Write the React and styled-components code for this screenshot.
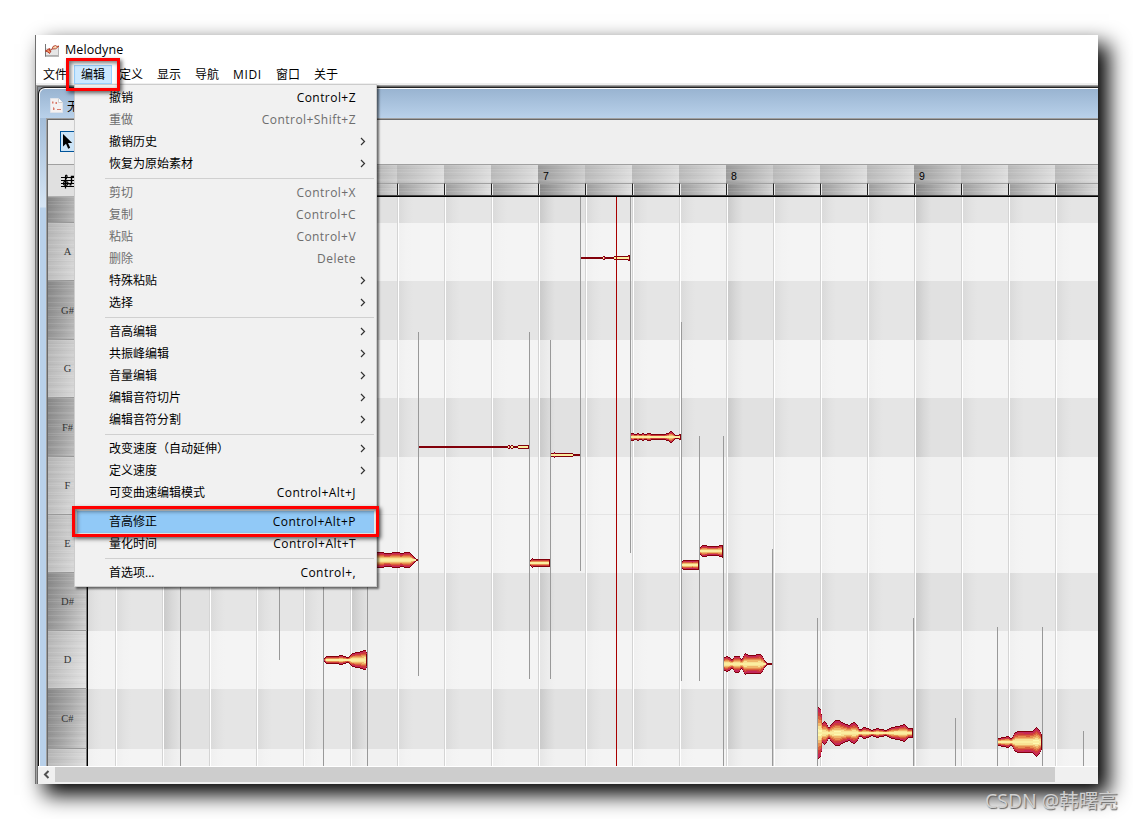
import React from 'react'
import styled, { createGlobalStyle, css } from 'styled-components'

const GlobalStyle = createGlobalStyle`
    * {
        box-sizing: border-box;
    }
    body {
        margin: 0;
        background: #fff;
        overflow: hidden;
        font-family: 'Open Sans', 'Noto Sans CJK SC', sans-serif;
        font-size: 12px;
        color: #000;
    }
    `
const Desktop = styled.div`
    position: relative;
    width: 1133px;
    height: 819px;
    padding: 35px;
    overflow: hidden;
    `
const Window = styled.div`
    display: flex;
    flex-direction: column;
    width: 1063px;
    height: 749px;
    background: #fff;
    border-left: 1px solid #707070;
    box-shadow: 10px 10px 20px 1px #000;
    `
const TitleBar = styled.div`
    display: flex;
    align-items: center;
    gap: 5px;
    height: 29px;
    padding-left: 8px;
    font-size: 12.5px;
    letter-spacing: 0.1px;
    `
const MenuBar = styled.div`
    display: flex;
    height: 19px;
    margin-top: 1px;
    margin-bottom: -1px;
    position: relative;
    z-index: 2;
    `
const MenuTitle = styled.div`
    position: relative;
    height: 19px;
    padding: 0 ${props => props.$open ? 6 : 7}px;
    line-height: ${props => props.$open ? 17 : 19}px;
    white-space: nowrap;
    ${props => props.$latin && css`
        width: 43px;
        letter-spacing: 0.6px;
    `}
    ${props => props.$open && css`
        background: #cce8ff;
        border: 1px solid #99d1ff;
    `}
    `
const Menu = styled.div`
    position: absolute;
    left: -1px;
    top: 18px;
    width: 303px;
    padding: 2px;
    background: #f1f1f1;
    border: 1px solid #ccc;
    box-shadow: 2px 2px 2px rgba(0, 0, 0, 0.55);
    `
const MenuRow = styled.div`
    display: flex;
    align-items: center;
    justify-content: space-between;
    height: 22px;
    padding: 0 17px 0 32px;
    line-height: 22px;
    color: ${props => props.$disabled ? '#6d6d6d' : '#000'};
    background: ${props => props.$active ? '#91c9f7' : 'none'};
    `
const Shortcut = styled.span`
    margin-right: 1px;
    letter-spacing: 0.45px;
    `
const Chevron = styled.svg`
    width: 6px;
    height: 9px;
    margin: 0 -9px 1px 0;
    `
const Divider = styled.div`
    height: 7px;
    margin-left: 28px;
    padding-top: 3px;
    &::after {
        content: '';
        display: block;
        height: 1px;
        background: #d0d0d0;
    }
    `
const Workspace = styled.div`
    flex: 1;
    display: flex;
    flex-direction: column;
    min-height: 0;
    padding-top: 2px;
    background: #f0f0f0;
    `
const Mdi = styled.div`
    flex: 1;
    display: flex;
    flex-direction: column;
    min-height: 0;
    border-left: 1px solid #a0a0a0;
    border-top: 1px solid #a0a0a0;
    `
const MdiInner = styled.div`
    flex: 1;
    display: flex;
    flex-direction: column;
    min-height: 0;
    border-left: 1px solid #696969;
    border-top: 1px solid #696969;
    background: #8a8f96;
    `
const Doc = styled.div`
    height: 679px;
    display: flex;
    flex-direction: column;
    border-left: 1px solid #111;
    border-top: 1px solid #222;
    border-top-left-radius: 7px;
    background: #111;
    `
const DocFace = styled.div`
    flex: 1;
    display: flex;
    flex-direction: column;
    min-height: 0;
    padding-left: 6px;
    border-left: 1px solid #fff;
    border-top: 1px solid #fff;
    border-top-left-radius: 6px;
    background:
        linear-gradient(#99b4d1, #b9d1ea) 0 0 / 100% 29px no-repeat,
        linear-gradient(#a3bdd9 29px, #d6e5f4 118px, #b9d1ea 119px);
    `
const DocTitle = styled.div`
    display: flex;
    align-items: center;
    gap: 4px;
    height: 29px;
    padding: 4px 0 0 4px;
    `
const DocBody = styled.div`
    flex: 1;
    display: flex;
    flex-direction: column;
    min-height: 0;
    border-left: 1px solid #a0a0a0;
    border-top: 1px solid #a0a0a0;
    `
const DocContent = styled.div`
    flex: 1;
    display: flex;
    flex-direction: column;
    min-height: 0;
    border-left: 1px solid #696969;
    border-top: 1px solid #696969;
    background: #efefef;
    `
const Toolbar = styled.div`
    display: flex;
    align-items: center;
    height: 45px;
    padding-left: 12px;
    border-bottom: 1px solid #a0a0a0;
    `
const Tool = styled.div`
    display: flex;
    width: 21px;
    height: 21px;
    margin-bottom: 1px;
    background: #cce4f7;
    border: 1px solid #00549a;
    `
const RulerRow = styled.div`
    display: flex;
    height: 32px;
    `
const Corner = styled.div`
    width: 40px;
    padding: 8px 0 0 11px;
    background: #e0e0e0;
    border-bottom: 1px solid #b0b0b0;
    `
const Ruler = styled.div`
    display: flex;
    flex: 1;
    overflow: hidden;
    border-bottom: 1px solid #000;
    box-shadow: inset 0 -1px 0 #444;
    `
const streaks = css`
    repeating-linear-gradient(180deg, rgba(255, 255, 255, 0.1) 0 1px, transparent 1px 3px, rgba(0, 0, 0, 0.025) 3px 4px, transparent 4px 7px),
    repeating-linear-gradient(180deg, transparent 0 4px, rgba(255, 255, 255, 0.08) 4px 5px, transparent 5px 11px)
    `
const Beat = styled.div`
    flex: none;
    width: ${props => props.$width}px;
    display: flex;
    flex-direction: column;
    `
const BeatTop = styled.div`
    height: 18px;
    padding-left: 5px;
    font: 10.5px/22px 'Liberation Sans', sans-serif;
    background: ${streaks}, linear-gradient(105deg, ${props => props.$bar ? '#9a9a9a, #d0d0d0' : '#b8b8b8, #e0e0e0'});
    `
const BeatBottom = styled.div`
    height: 12px;
    border-top: 1px solid #a0a0a0;
    border-left: 1px solid #222;
    box-shadow: inset 1px 0 0 #eee;
    background: ${streaks}, linear-gradient(105deg, ${props => props.$bar ? '#868686, #d6d6d6' : '#9c9c9c, #e2e2e2'});
    `
const Editor = styled.div`
    display: flex;
    flex: 1;
    min-height: 0;
    overflow: hidden;
    `
const Keys = styled.div`
    width: 40px;
    flex: none;
    border-right: 1px solid #000;
    `
const Key = styled.div`
    height: ${props => props.$height}px;
    display: flex;
    align-items: center;
    justify-content: center;
    overflow: hidden;
    padding: 1px 0 0 1px;
    font: 10.5px/10px 'Liberation Serif', serif;
    color: #333;
    border-bottom: 1px solid #999;
    border-right: 1px solid #777;
    background: ${streaks}, linear-gradient(100deg, ${props => props.$dark ? '#868686, #a8a8a8 50%, #d0d0d0' : '#b4b4b4, #cccccc 50%, #e4e4e4'});
    `
const Roll = styled.div`
    flex: 1;
    display: grid;
    overflow: hidden;
    `
const Lanes = styled.div`
    grid-area: 1 / 1;
    min-width: 0;
    overflow: hidden;
    `
const Lane = styled.div`
    display: flex;
    height: ${props => props.$height}px;
    `
const laneFill = props => {
    if (props.$dark) return props.$bar ? '#cacaca, #d8d8d8 8px, #e1e1e1 15px' : '#dadada, #e1e1e1 7px, #e5e5e5 14px'
    return props.$bar ? '#e6e6e6, #ededed 8px, #f1f1f1 15px' : '#f0f0f0, #f3f3f3 7px, #f4f4f4 14px'
}
const Cell = styled.div`
    flex: none;
    width: ${props => props.$width}px;
    border-left: 1px solid #fff;
    border-right: 1px solid #d4d4d4;
    background: linear-gradient(90deg, ${laneFill});
    box-shadow: ${props => props.$line ? 'inset 0 -1px 0 #e4e4e4' : 'none'};
    &:first-child {
        border-left: 0;
    }
    `
const Notes = styled.svg`
    grid-area: 1 / 1;
    width: 1010px;
    height: 569px;
    `
const ScrollBar = styled.div`
    display: flex;
    height: 18px;
    padding-bottom: 2px;
    background: #f0f0f0;
    border-top: 1px solid #fff;
    `
const ScrollArrow = styled.svg`
    width: 17px;
    height: 15px;
    `
const Thumb = styled.div`
    width: 1000px;
    background: #cdcdcd;
    `
const Marker = styled.div`
    position: absolute;
    z-index: 3;
    left: ${props => props.$x}px;
    top: ${props => props.$y}px;
    width: ${props => props.$w}px;
    height: ${props => props.$h}px;
    border: 3px solid #f00;
    box-shadow: 2px 2px 4px rgba(0, 0, 0, 0.6), inset 2px 2px 4px rgba(0, 0, 0, 0.55);
    `
const Watermark = styled.div`
    position: absolute;
    left: 985px;
    top: 788px;
    font-size: 19.5px;
    line-height: 26px;
    white-space: nowrap;
    color: #d0d0d0;
    text-shadow: 1px 1px 1px #666;
    `

const menuTitles = ['文件', '编辑', '定义', '显示', '导航', 'MIDI', '窗口', '关于']

const menuGroups = [
    [
        { label: '撤销', keys: 'Control+Z' },
        { label: '重做', keys: 'Control+Shift+Z', disabled: true },
        { label: '撤销历史', sub: true },
        { label: '恢复为原始素材', sub: true }
    ],
    [
        { label: '剪切', keys: 'Control+X', disabled: true },
        { label: '复制', keys: 'Control+C', disabled: true },
        { label: '粘贴', keys: 'Control+V', disabled: true },
        { label: '删除', keys: 'Delete', disabled: true },
        { label: '特殊粘贴', sub: true },
        { label: '选择', sub: true }
    ],
    [
        { label: '音高编辑', sub: true },
        { label: '共振峰编辑', sub: true },
        { label: '音量编辑', sub: true },
        { label: '编辑音符切片', sub: true },
        { label: '编辑音符分割', sub: true }
    ],
    [
        { label: '改变速度（自动延伸）', sub: true },
        { label: '定义速度', sub: true },
        { label: '可变曲速编辑模式', keys: 'Control+Alt+J' }
    ],
    [
        { label: '音高修正', keys: 'Control+Alt+P', active: true },
        { label: '量化时间', keys: 'Control+Alt+T' }
    ],
    [
        { label: '首选项...', keys: 'Control+,' }
    ]
]

const lanes = [
    { name: '', height: 26, dark: true },
    { name: 'A', height: 58 },
    { name: 'G#', height: 59, dark: true },
    { name: 'G', height: 58 },
    { name: 'F#', height: 59, dark: true },
    { name: 'F', height: 58, line: true },
    { name: 'E', height: 58 },
    { name: 'D#', height: 58, dark: true },
    { name: 'D', height: 58 },
    { name: 'C#', height: 60, dark: true },
    { name: '', height: 60 }
]

// first beat is cut by the key column, a bar starts every fourth beat
const beats = Array.from({ length: 22 }, (_, i) => ({
    bar: i % 4 === 2,
    number: i % 4 === 2 ? 5 + (i - 2) / 4 : ''
}))

// [x, top, bottom]
const separators = [
    [180, 500, 766], [279, 500, 660], [323, 500, 766], [367, 500, 766],
    [418, 332, 676], [529, 332, 679], [550, 340, 679], [580, 197, 571],
    [630, 197, 553], [681, 322, 681], [699, 436, 681], [723, 436, 766],
    [772, 549, 766], [817, 618, 766], [913, 618, 766], [955, 718, 766],
    [997, 627, 766], [1042, 627, 766], [1083, 731, 766]
]

// each blob is a centre line and its envelope, as [x, half height]
const blobs = [
    { y: 560, env: [[370, 7], [378, 8], [382, 8], [385, 7], [389, 7], [394, 8], [398, 8], [401, 7], [406, 8], [410, 7.5], [412, 6], [414, 3], [416, 1.5], [418, 0.5]] },
    { y: 447, env: [[419, 1], [507, 1], [509, 2], [510, 1], [512, 2], [514, 1], [517, 1], [518, 2], [529, 2]] },
    { y: 563, env: [[530, 3], [532, 5], [533, 4], [549, 4], [550, 3]] },
    { y: 455, env: [[551, 2], [553, 2], [554, 3], [556, 2], [573, 2], [573.5, 1], [580, 1]] },
    { y: 258, env: [[581, 1], [602, 1], [604, 2], [605, 1], [613, 1], [614, 2], [627, 2], [628, 3], [630, 3]] },
    { y: 437, env: [[631, 3.5], [633, 4], [635, 3], [638, 4], [640, 3], [643, 4], [645, 3], [648, 4], [650, 4], [651, 3], [664, 3], [668, 4], [670, 6], [672, 6], [674, 3.5], [676, 2], [678, 2], [679, 3], [681, 3]] },
    { y: 565, env: [[682, 3.5], [684, 5.5], [687, 5], [693, 4.5], [698, 5.5], [699, 4]] },
    { y: 551, env: [[700, 3.5], [702, 6], [705, 6], [708, 5], [717, 5], [720, 6], [723, 6.5]] },
    { y: 664, env: [[724, 7], [727, 8], [729, 7], [732, 4.5], [735, 8.5], [739, 8.5], [741, 5.5], [742, 5], [745, 11], [748, 9.5], [756, 9.5], [760, 10.5], [763, 7], [765, 3], [767, 1], [772, 1]] },
    { y: 733, env: [[818, 29], [819, 23], [820, 27], [821.5, 19], [822, 10], [825, 12], [829, 5.5], [832, 10], [835, 13], [839, 13], [843, 10.5], [849, 8], [854, 11], [856, 10], [860, 3.5], [864, 6], [868, 5], [872, 3], [877, 5], [886, 3], [892, 6], [898, 7], [905, 9], [908, 5.5], [911, 5], [913, 5]] },
    { y: 742, env: [[998, 4], [1003, 5], [1008, 6], [1011, 4], [1013, 6], [1015, 10], [1020, 11.5], [1028, 10.5], [1033, 11.5], [1037, 15], [1040, 11], [1042, 7]] },
    { y: 660, env: [[324, 1], [327, 4.5], [335, 4], [342, 5], [346, 3.5], [348, 3], [352, 7], [358, 8], [364, 10], [366, 10], [367, 6]] }
]

const layers = [
    [1, '#c4275a'],
    [0.85, '#cf3a3c'],
    [0.7, '#d9603c'],
    [0.56, '#e68e50'],
    [0.42, '#efb86c'],
    [0.28, '#f8e294'],
    [0.14, '#fdf9b0']
]

function outline(env, y, scale) {
    const top = env.map(([x, h]) => `${x},${y - h * scale}`)
    const bottom = [...env].reverse().map(([x, h]) => `${x},${y + h * scale}`)
    return [...top, ...bottom].join(' ')
}

function Blob({ y, env }) {
    // shrink by the outline's width before the inner layers are scaled
    const inner = env.map(([x, h]) => [x, Math.max(h - 1, 0)])
    const [endX, endH] = env[env.length - 1]
    return (
        <g>
            <polygon points={outline(env, y, 1)} fill="#82000a" />
            {layers.map(([scale, fill]) => (
                <polygon key={fill} points={outline(inner, y, scale)} fill={fill} />
            ))}
            <polygon points={outline(inner.map(([x, h]) => [x, Math.min(h, 0.8)]), y, 1)} fill="#fbeea0" />
            <rect x={endX - 1} y={y - endH} width="1" height={endH * 2} fill="#82000a" />
        </g>
    )
}

function PianoRoll() {
    return (
        <Editor>
            <Keys>
                {lanes.map((lane, i) => (
                    <Key key={i} $height={lane.height} $dark={lane.dark}>{lane.name}</Key>
                ))}
            </Keys>
            <Roll>
                <Lanes>
                    {lanes.map((lane, i) => (
                        <Lane key={i} $height={lane.height}>
                            {beats.map((beat, j) => (
                                <Cell key={j} $width={j === 0 ? 28 : 47} $bar={beat.bar} $dark={lane.dark} $line={lane.line} />
                            ))}
                        </Lane>
                    ))}
                </Lanes>
                <Notes viewBox="88 197 1010 569" shapeRendering="crispEdges">
                    {separators.map(([x, top, bottom]) => (
                        <rect key={x} x={x} y={top} width="1" height={bottom - top} fill="#999" />
                    ))}
                    {blobs.map(blob => <Blob key={blob.y + '-' + blob.env[0][0]} {...blob} />)}
                    <rect x="616" y="197" width="1" height="569" fill="#a80000" />
                </Notes>
            </Roll>
        </Editor>
    )
}

function EditMenu() {
    return (
        <Menu>
            {menuGroups.map((group, i) => (
                <React.Fragment key={i}>
                    {i > 0 && <Divider />}
                    {group.map(item => (
                        <MenuRow key={item.label} $disabled={item.disabled} $active={item.active}>
                            <span>{item.label}</span>
                            {item.keys && <Shortcut>{item.keys}</Shortcut>}
                            {item.sub && (
                                <Chevron viewBox="0 0 6 9">
                                    <path d="M1 1l3.5 3.5L1 8" fill="none" stroke="#333" strokeWidth="1.2" />
                                </Chevron>
                            )}
                        </MenuRow>
                    ))}
                </React.Fragment>
            ))}
        </Menu>
    )
}

function AppIcon() {
    return (
        <svg width="16" height="16" viewBox="0 0 16 16">
            <path d="M2 6h13v8H2z" fill="#e6e6e6" />
            <path d="M1.500 2v12.500M1 14h14" fill="none" stroke="#777" />
            <path d="M14.500 5v9" fill="none" stroke="#b5b5b5" />
            <path d="M1.500 9l4-2.500v2l1.500.5-1.500 2.500-1.500-1.500z" fill="#f09060" stroke="#b03020" strokeWidth=".9" />
            <path d="M6 8l2-.5 1-3 2.500-1 1.500 1 2-.5-1.500 1.500-2 1.300-3 .2" fill="#f8d8b0" stroke="#b03a28" strokeWidth=".9" />
        </svg>
    )
}

function DocIcon() {
    return (
        <svg width="13" height="16" viewBox="0 0 13 16">
            <path d="M.5.5h8l4 4v10H.5z" fill="#f4f1f1" stroke="#dfe3ea" />
            <path d="M8.500.5v4h4" fill="#fff" stroke="#c4c4c4" strokeWidth=".8" />
            <path d="M2 3.500h1.500v2H2zM5.500 4H7v2H5.500zM3 9l1.500 1v2H3zM7 11h4v1H7z" fill="#d97a6a" />
        </svg>
    )
}

function StaffIcon() {
    return (
        <svg width="24" height="18" viewBox="0 0 24 18" fill="none" stroke="#000">
            <path d="M2 4.500h22M2 7.500h22M2 10.500h22M2 13.500h22" shapeRendering="crispEdges" />
            <path d="M6.500 15.500V3.500c0-2 2-1.500 1.500.5-.5 2.500-3.500 4-3.500 6.500s4.500 2.500 4.500 0-2.500-2-2.500 0" strokeWidth="1.200" />
            <path d="M12.500 11V3.500H18" strokeWidth="1.400" />
            <path d="M10.500 11.500h2" strokeWidth="2" />
        </svg>
    )
}

function App() {
    return (
        <Desktop>
            <GlobalStyle />
            <Window>
                <TitleBar>
                    <AppIcon />
                    <span>Melodyne</span>
                </TitleBar>
                <MenuBar>
                    {menuTitles.map(title => (
                        <MenuTitle key={title} $open={title === '编辑'} $latin={title === 'MIDI'}>
                            {title}
                            {title === '编辑' && <EditMenu />}
                        </MenuTitle>
                    ))}
                </MenuBar>
                <Workspace>
                    <Mdi>
                        <MdiInner>
                            <Doc>
                                <DocFace>
                                    <DocTitle>
                                        <DocIcon />
                                        <span>无</span>
                                    </DocTitle>
                                    <DocBody>
                                        <DocContent>
                                            <Toolbar>
                                                <Tool>
                                                    <svg width="19" height="19" viewBox="0 0 19 19">
                                                        <path d="M2 2v12.500l3-2.800 2.200 5 2-.9L7 11h4.200z" fill="#000" />
                                                    </svg>
                                                </Tool>
                                            </Toolbar>
                                            <RulerRow>
                                                <Corner>
                                                    <StaffIcon />
                                                </Corner>
                                                <Ruler>
                                                    {beats.map((beat, i) => (
                                                        <Beat key={i} $width={i === 0 ? 27 : 47}>
                                                            <BeatTop $bar={beat.bar}>{beat.number}</BeatTop>
                                                            <BeatBottom $bar={beat.bar} />
                                                        </Beat>
                                                    ))}
                                                </Ruler>
                                            </RulerRow>
                                            <PianoRoll />
                                        </DocContent>
                                    </DocBody>
                                </DocFace>
                            </Doc>
                            <ScrollBar>
                                <ScrollArrow viewBox="0 0 17 15">
                                    <path d="M10.500 4L7 7.500l3.500 3.500" fill="none" stroke="#505050" strokeWidth="2" />
                                </ScrollArrow>
                                <Thumb />
                            </ScrollBar>
                        </MdiInner>
                    </Mdi>
                </Workspace>
            </Window>
            <Marker $x={66} $y={58} $w={54} $h={33} />
            <Marker $x={72} $y={506} $w={307} $h={31} />
            <Watermark>CSDN @韩曙亮</Watermark>
        </Desktop>
    )
}

export default App
